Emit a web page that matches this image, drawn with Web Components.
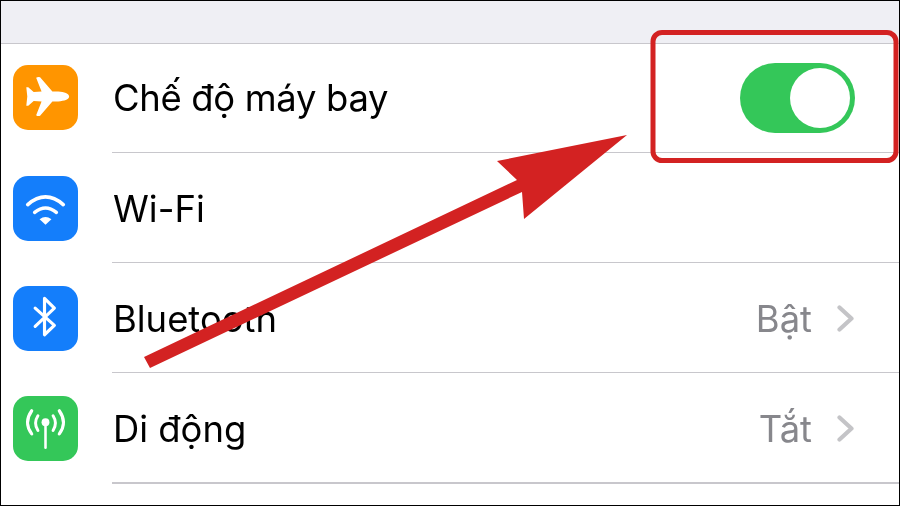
<!DOCTYPE html>
<html lang="vi"><head><meta charset="utf-8"><title>Cài đặt</title>
<style>
html,body{margin:0;padding:0;background:#fff}
body{width:900px;height:506px;overflow:hidden}
</style></head>
<body>
<settings-screen>
  <settings-row label="Chế độ máy bay" style="--row-h:109px;--ls:-.3px;--icon-shift:-1px;--label-top:0px">
    <app-icon slot="icon" color="#ff9500"><svg viewBox="0 0 66 66" width="65" height="65"><path fill="#fff" d="M57 32C57 29 52 27.5 46 27L40 27L27.5 12.5Q25.5 11.5 23.5 13L29 27L21 27.5L15.5 22.5L13.5 22.5L14.5 32L13.5 41.5L15.5 41.5L21 36.5L29 37L23.5 51Q25.5 52.5 27.5 51.5L40 37L46 37C52 36.5 57 35 57 32Z"/></svg></app-icon>
    <toggle-switch slot="trailing"></toggle-switch>
  </settings-row>
  <settings-row label="Wi-Fi">
    <app-icon slot="icon" color="#147efb"><svg viewBox="0 0 66 66" width="65" height="65" fill="none" stroke="#fff" stroke-linecap="round"><path stroke-width="3.8" d="M15 29Q33 13.5 51 29"/><path stroke-width="3.6" d="M22 37Q33 28 44 37"/><path fill="#fff" stroke="none" d="M27 44Q33 39.5 39 44L33 49.5Z"/></svg></app-icon>
  </settings-row>
  <settings-row label="Bluetooth" detail="Bật" chevron>
    <app-icon slot="icon" color="#147efb"><svg viewBox="0 0 66 66" width="65" height="65" fill="none" stroke="#fff" stroke-width="3.2" stroke-linejoin="round" stroke-linecap="round"><path d="M22.5 22.5L42 40L32 49.5V12.5L42 22.5L22.5 41"/></svg></app-icon>
  </settings-row>
  <settings-row label="Di động" detail="Tắt" chevron style="--line-h:2px;--row-h:111px">
    <app-icon slot="icon" color="#34c759"><svg viewBox="0 0 66 66" width="65" height="65" fill="none" stroke="#fff" stroke-linecap="round"><circle cx="33" cy="26.7" r="4" fill="#fff" stroke="none"/><path stroke-width="2.6" d="M33 28V52.5"/><path stroke-width="3" d="M25.3 20Q20.5 27.5 25.3 35M40.7 20Q45.5 27.5 40.7 35"/><path stroke-width="3.2" d="M19 15Q10.5 27 19 38.5M47 15Q55.5 27 47 38.5"/></svg></app-icon>
  </settings-row>
  <callout-overlay slot="overlay"></callout-overlay>
</settings-screen>
<script>
class SettingsScreen extends HTMLElement{
  constructor(){super();this.attachShadow({mode:'open'}).innerHTML=`<style>
    :host{display:block;position:relative;box-sizing:border-box;width:900px;height:506px;border:1px solid #000;background:#fff;overflow:hidden;font-family:Inter,"Liberation Sans",sans-serif;color:#000}
    .top{height:42px;background:#efeff4;border-bottom:1px solid #c8c7cc}
    .list{display:flex;flex-direction:column;filter:blur(.3px)}
  </style><div class="top"></div><div class="list"><slot></slot></div><slot name="overlay"></slot>`;}
}
customElements.define('settings-screen',SettingsScreen);
class SettingsRow extends HTMLElement{
  constructor(){super();this.attachShadow({mode:'open'});}
  connectedCallback(){
    const d=this.getAttribute('detail');
    this.shadowRoot.innerHTML=`<style>
      :host{display:block}
      .row{display:flex;align-items:center;height:var(--row-h,110px);box-sizing:border-box;padding-left:12.4px}
      .icon{display:flex;width:65px;flex:none;margin-top:calc(var(--icon-shift,0px)*2)}
      .body{flex:1;height:100%;margin-left:33.6px;box-sizing:border-box;border-bottom:var(--line-h,1px) solid #c8c7cc;display:flex;align-items:center;padding-right:45px;}
      .label{flex:1;font-size:36.4px;line-height:44px;letter-spacing:var(--ls,0);white-space:nowrap;margin-left:1px;padding-top:var(--label-top,3px)}
      .detail{font-size:36.4px;line-height:44px;color:#87878c;padding-top:3px}
      svg{display:block;margin:2px 0 0 25px;flex:none}
    </style><div class="row"><div class="icon"><slot name="icon"></slot></div><div class="body"><span class="label">${this.getAttribute('label')}</span>${d?`<span class="detail">${d}</span>`:''}<slot name="trailing"></slot>${this.hasAttribute('chevron')?`<svg width="17" height="27" viewBox="0 0 17 27" fill="none" stroke="#c4c4c7" stroke-width="4.2" stroke-linecap="round" stroke-linejoin="round"><path d="M2.5 2.5L14.5 13.5L2.5 24.5"/></svg>`:''}</div></div>`;
  }
}
customElements.define('settings-row',SettingsRow);
class AppIcon extends HTMLElement{
  constructor(){super();this.attachShadow({mode:'open'});}
  connectedCallback(){
    this.shadowRoot.innerHTML=`<style>:host{display:block;width:65px;height:65px;border-radius:15px;overflow:hidden;background:${this.getAttribute('color')}}::slotted(svg){display:block}</style><slot></slot>`;
  }
}
customElements.define('app-icon',AppIcon);
class ToggleSwitch extends HTMLElement{
  constructor(){super();this.attachShadow({mode:'open'}).innerHTML=`<style>
    :host{display:flex;justify-content:flex-end;align-items:center;box-sizing:border-box;width:115px;height:70px;padding-right:5px;border-radius:35px;background:#34c759;margin-right:-1px}
    .knob{width:60px;height:60px;border-radius:50%;background:#fff}
  </style><div class="knob"></div>`;}
}
customElements.define('toggle-switch',ToggleSwitch);
class CalloutOverlay extends HTMLElement{
  constructor(){super();this.attachShadow({mode:'open'}).innerHTML=`<style>
    :host{position:absolute;inset:-1px;display:block;pointer-events:none}
    svg{display:block}
  </style><svg width="900" height="506" viewBox="0 0 900 506">
    <rect x="653" y="32.5" width="243" height="128" rx="9" fill="none" stroke="#d32222" stroke-width="5"/>
    <polygon fill="#d32222" points="144,357 517,180 497,161 627,135 524,219 522,192 150,368"/>
  </svg>`;}
}
customElements.define('callout-overlay',CalloutOverlay);
</script>
</body></html>
